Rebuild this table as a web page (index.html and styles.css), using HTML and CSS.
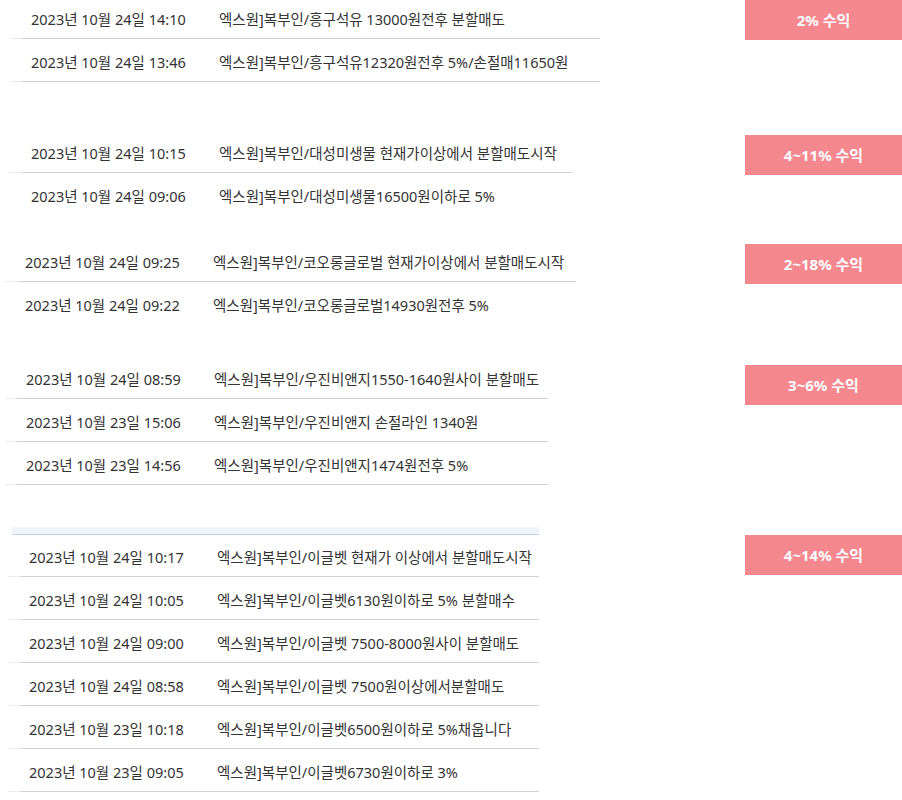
FILE: index.html
```html
<!DOCTYPE html>
<html lang="ko">
<head>
  <meta charset="UTF-8" />
  <meta name="viewport" content="width=device-width, initial-scale=1.0"/>
  <title>수익 내역</title>
  <link rel="stylesheet" href="styles.css">
</head>
<body>
  <div class="group g1">
    <div class="list">
      <div class="row"><span class="date">2023년 10월 24일 14:10</span><span class="msg">엑스원]복부인/흥구석유 13000원전후 분할매도</span></div>
      <div class="row"><span class="date">2023년 10월 24일 13:46</span><span class="msg">엑스원]복부인/흥구석유12320원전후 5%/손절매11650원</span></div>
    </div>
    <div class="badge">2% 수익</div>
  </div>

  <div class="group g2">
    <div class="list">
      <div class="row"><span class="date">2023년 10월 24일 10:15</span><span class="msg">엑스원]복부인/대성미생물 현재가이상에서 분할매도시작</span></div>
      <div class="row last"><span class="date">2023년 10월 24일 09:06</span><span class="msg">엑스원]복부인/대성미생물16500원이하로 5%</span></div>
    </div>
    <div class="badge">4~11% 수익</div>
  </div>

  <div class="group g3">
    <div class="list">
      <div class="row"><span class="date">2023년 10월 24일 09:25</span><span class="msg">엑스원]복부인/코오롱글로벌 현재가이상에서 분할매도시작</span></div>
      <div class="row last"><span class="date">2023년 10월 24일 09:22</span><span class="msg">엑스원]복부인/코오롱글로벌14930원전후 5%</span></div>
    </div>
    <div class="badge">2~18% 수익</div>
  </div>

  <div class="group g4">
    <div class="list">
      <div class="row"><span class="date">2023년 10월 24일 08:59</span><span class="msg">엑스원]복부인/우진비앤지1550-1640원사이 분할매도</span></div>
      <div class="row"><span class="date">2023년 10월 23일 15:06</span><span class="msg">엑스원]복부인/우진비앤지 손절라인 1340원</span></div>
      <div class="row"><span class="date">2023년 10월 23일 14:56</span><span class="msg">엑스원]복부인/우진비앤지1474원전후 5%</span></div>
    </div>
    <div class="badge">3~6% 수익</div>
  </div>

  <div class="group g5">
    <div class="list">
      <div class="list-head"></div>
      <div class="row"><span class="date">2023년 10월 24일 10:17</span><span class="msg">엑스원]복부인/이글벳 현재가 이상에서 분할매도시작</span></div>
      <div class="row"><span class="date">2023년 10월 24일 10:05</span><span class="msg">엑스원]복부인/이글벳6130원이하로 5% 분할매수</span></div>
      <div class="row"><span class="date">2023년 10월 24일 09:00</span><span class="msg">엑스원]복부인/이글벳 7500-8000원사이 분할매도</span></div>
      <div class="row"><span class="date">2023년 10월 24일 08:58</span><span class="msg">엑스원]복부인/이글벳 7500원이상에서분할매도</span></div>
      <div class="row"><span class="date">2023년 10월 23일 10:18</span><span class="msg">엑스원]복부인/이글벳6500원이하로 5%채웁니다</span></div>
      <div class="row"><span class="date">2023년 10월 23일 09:05</span><span class="msg">엑스원]복부인/이글벳6730원이하로 3%</span></div>
    </div>
    <div class="badge">4~14% 수익</div>
  </div>
</body>
</html>
```

FILE: styles.css
```css
body {
  margin: 0;
  padding: 0;
  background: #fff;
  font-family: "Noto Sans", "Noto Sans CJK KR", sans-serif;
  color: #333;
  overflow: hidden;
}

.group {
  display: flex;
  justify-content: space-between;
  align-items: flex-start;
}

.list {
  flex: none;
}

.row {
  display: flex;
  align-items: center;
  height: 42px;
  font-size: 14.5px;
  padding-left: 21px;
  background: linear-gradient(to right, #ececec 12px, #d2d2d2 12px) left bottom / 100% 1px no-repeat;
  border-bottom: 1px solid transparent;
}

.row.last {
  background: none;
}

.date {
  width: 188px;
  flex: none;
  white-space: nowrap;
}

.msg {
  white-space: nowrap;
}

.badge {
  width: 157px;
  height: 40px;
  line-height: 40px;
  background: #f5878f;
  color: #fff;
  font-size: 15px;
  font-weight: bold;
  text-align: center;
}

/* each block sits a bit differently */
.g1 { margin-top: -3px; }
.g1 .list { margin-left: 10px; width: 590px; }
.g1 .badge { margin-top: 3px; }

.g2 { margin-top: 48px; }
.g2 .list { margin-left: 10px; width: 562px; }
.g2 .badge { margin-top: 4px; }

.g3 { margin-top: 23px; }
.g3 .list { margin-left: 4px; width: 572px; }
.g3 .row { background: linear-gradient(to right, #ececec 14px, #d2d2d2 14px) left bottom / 100% 1px no-repeat; }
.g3 .row.last { background: none; }
.g3 .badge { margin-top: 4px; }

.g4 { margin-top: 31px; }
.g4 .list { margin-left: 5px; width: 543px; }
.g4 .badge { margin-top: 8px; }

.g5 { margin-top: 41px; }
.g5 .list { margin-left: 8px; width: 531px; }
.g5 .badge { margin-top: 8px; }

.list-head {
  height: 7px;
  margin-left: 4px;
  background: #f1f4f9;
  border-bottom: 1px solid #c9d3e4;
}
```
